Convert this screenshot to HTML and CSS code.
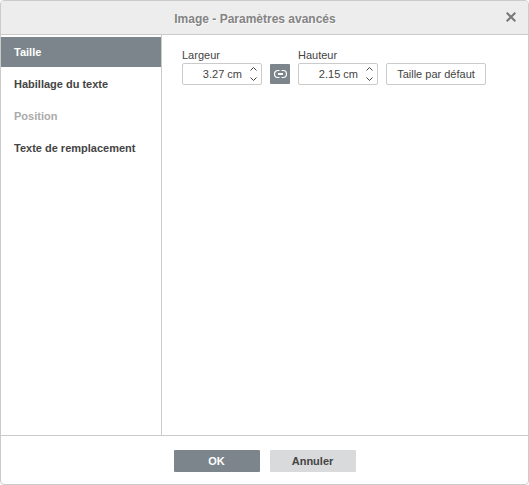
FILE: index.html
```html
<!DOCTYPE html>
<html lang="fr">
<head>
<meta charset="utf-8">
<title>Image - Paramètres avancés</title>
<link rel="stylesheet" href="styles.css">
</head>
<body>
<div class="dialog">
  <header class="header">
    <span class="title">Image - Paramètres avancés</span>
    <svg class="close" width="10" height="10" viewBox="0 0 10 10"><path d="M.7.7l8.6 8.6M9.3.7L.7 9.3"/></svg>
  </header>
  <main class="body">
    <nav class="tabs">
      <div class="tab active">Taille</div>
      <div class="tab">Habillage du texte</div>
      <div class="tab disabled">Position</div>
      <div class="tab">Texte de remplacement</div>
    </nav>
    <section class="content">
      <div class="field">
        <span class="label">Largeur</span>
        <div class="spinner"><span class="value">3.27 cm</span>
          <svg class="arrows" width="7" height="16" viewBox="0 0 7 16"><path d="M.5 4.5l3-3 3 3M.5 11.5l3 3 3-3"/></svg>
        </div>
      </div>
      <div class="link">
        <svg width="20" height="20" viewBox="0 0 20 20"><path d="M9.5 6.5H7.8a3.3 3.5 0 0 0 0 7h1.7M11.5 6.5h1.7a3.3 3.5 0 0 1 0 7h-1.7"/><path class="bar" d="M8 10h5"/></svg>
      </div>
      <div class="field">
        <span class="label">Hauteur</span>
        <div class="spinner"><span class="value">2.15 cm</span>
          <svg class="arrows" width="7" height="16" viewBox="0 0 7 16"><path d="M.5 4.5l3-3 3 3M.5 11.5l3 3 3-3"/></svg>
        </div>
      </div>
      <div class="default-size">Taille par défaut</div>
    </section>
  </main>
  <footer class="footer">
    <div class="btn primary">OK</div>
    <div class="btn">Annuler</div>
  </footer>
</div>
</body>
</html>
```
FILE: styles.css
```css
* { box-sizing: border-box; }
body {
  margin: 0;
  background: #fff;
  color: #444;
  font: 11px/15px "Liberation Sans", Arial, sans-serif;
}
svg { display: block; fill: none; }
.dialog {
  display: flex;
  flex-direction: column;
  width: 529px;
  height: 485px;
  border: 1px solid #cbcbcb;
  border-radius: 4px;
  overflow: hidden;
}
.header {
  display: flex;
  align-items: center;
  height: 34px;
  padding: 3px 12px 0 3px;
  border-bottom: 1px solid #cbcbcb;
  background: #ededed;
}
.title {
  flex: 1;
  text-align: center;
  font-size: 12px;
  font-weight: bold;
  color: #848484;
  text-shadow: 1px 1px 0 #f8f8f8;
}
.close { stroke: #787878; stroke-width: 2; margin-top: -5px; }
.body { display: flex; height: 400px; }
.tabs {
  display: flex;
  flex-direction: column;
  gap: 2px;
  width: 161px;
  padding-top: 2px;
  border-right: 1px solid #cbcbcb;
}
.tab {
  height: 30px;
  padding-left: 13px;
  line-height: 30px;
  font-weight: bold;
}
.active { background: #7d858c; color: #fff; }
.disabled { color: #aaa; }
.content {
  display: flex;
  align-items: flex-end;
  gap: 8px;
  height: 50px;
  padding-left: 20px;
}
.field { display: flex; flex-direction: column; width: 80px; }
.label { height: 15px; }
.spinner {
  display: flex;
  align-items: center;
  justify-content: flex-end;
  gap: 8px;
  height: 22px;
  padding-right: 4px;
  border: 1px solid #cbcbcb;
  border-radius: 2px;
}
.arrows { stroke: #444; stroke-width: 1; }
.link {
  width: 20px;
  height: 20px;
  margin-bottom: 1px;
  background: #7d858c;
  border-radius: 1px;
}
.link svg { stroke: #fff; stroke-width: 1.2; }
.link .bar { stroke-width: 2; }
.default-size {
  width: 100px;
  height: 22px;
  border: 1px solid #cbcbcb;
  border-radius: 2px;
  line-height: 20px;
  text-align: center;
}
.footer {
  display: flex;
  justify-content: center;
  gap: 10px;
  height: 49px;
  padding-top: 14px;
  border-top: 1px solid #cbcbcb;
}
.btn {
  width: 86px;
  height: 22px;
  border-radius: 1px;
  background: #d8dadc;
  line-height: 22px;
  text-align: center;
  font-weight: bold;
}
.primary { background: #7d858c; color: #fff; }
```
